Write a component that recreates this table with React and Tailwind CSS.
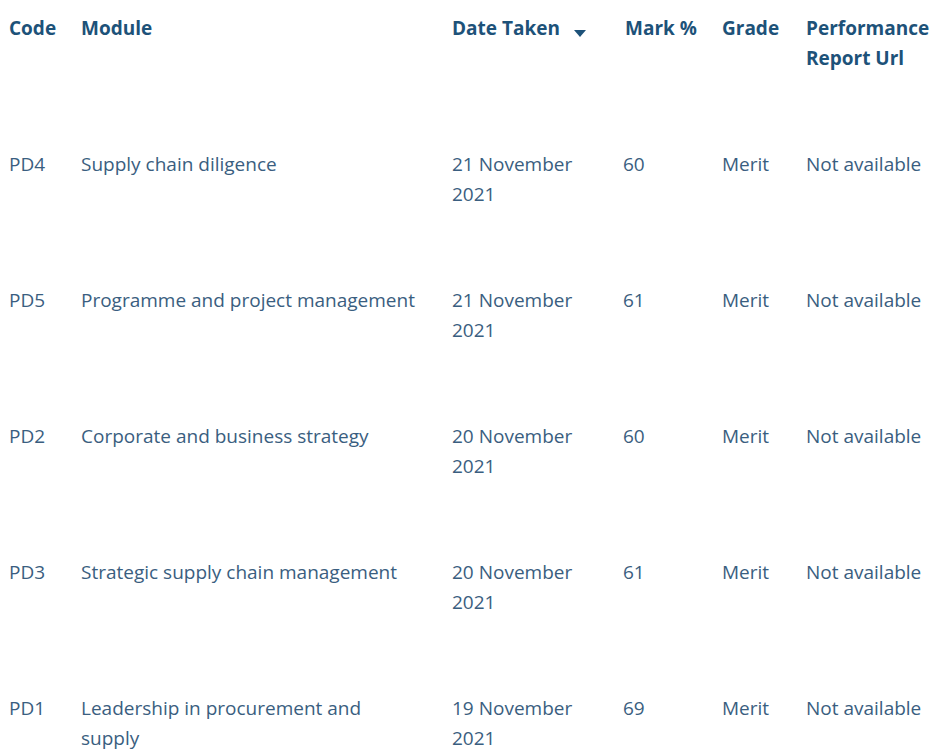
import React from 'react'

// Exam results table
const rows = [
  { code: 'PD4', module: 'Supply chain diligence', date: '21 November 2021', mark: 60, grade: 'Merit' },
  { code: 'PD5', module: 'Programme and project management', date: '21 November 2021', mark: 61, grade: 'Merit' },
  { code: 'PD2', module: 'Corporate and business strategy', date: '20 November 2021', mark: 60, grade: 'Merit' },
  { code: 'PD3', module: 'Strategic supply chain management', date: '20 November 2021', mark: 61, grade: 'Merit' },
  { code: 'PD1', module: 'Leadership in procurement and supply', date: '19 November 2021', mark: 69, grade: 'Merit' },
]

const App = () => {
  return (
    <div className="min-h-screen bg-white pl-[9px] text-[19px] leading-[30px]" style={{ fontFamily: '"Open Sans", "Liberation Sans", sans-serif' }}>
      <table className="table-fixed border-collapse text-left w-[940px]">
        <colgroup>
          <col className="w-[72px]" />
          <col className="w-[371px]" />
          <col className="w-[171px]" />
          <col className="w-[99px]" />
          <col className="w-[84px]" />
          <col />
        </colgroup>
        <thead>
          <tr className="text-[#1d5279] font-bold align-top">
            <th className="pt-[13px] pb-[76px] pr-[30px] font-bold">Code</th>
            <th className="pt-[13px] pb-[76px] pr-[34px] font-bold">Module</th>
            <th className="pt-[13px] pb-[76px] pr-[10px] font-bold">
              <span className="flex items-center">
                Date Taken
                <svg width="12" height="7" viewBox="0 0 12 7" className="ml-[14px] mt-[10px]">
                  <path d="M0 0 L12 0 L6 7 Z" fill="#1d5279" />
                </svg>
              </span>
            </th>
            <th className="pt-[13px] pb-[76px] pl-[2px] pr-[10px] font-bold">Mark %</th>
            <th className="pt-[13px] pb-[76px] pr-[10px] font-bold">Grade</th>
            <th className="pt-[13px] pb-[76px] pr-[10px] font-bold">Performance Report Url</th>
          </tr>
        </thead>
        <tbody className="text-[#3a5e80]">
          {rows.map((r) => (
            <tr key={r.code} className="align-top">
              <td className="pb-[76px] pr-[30px]">{r.code}</td>
              <td className="pb-[76px] pr-[34px]">{r.module}</td>
              <td className="pb-[76px] pr-[30px]">{r.date}</td>
              <td className="pb-[76px] pr-[10px]">{r.mark}</td>
              <td className="pb-[76px] pr-[10px]">{r.grade}</td>
              <td className="pb-[76px] pr-[10px]">Not available</td>
            </tr>
          ))}
        </tbody>
      </table>
    </div>
  )
}

export default App
